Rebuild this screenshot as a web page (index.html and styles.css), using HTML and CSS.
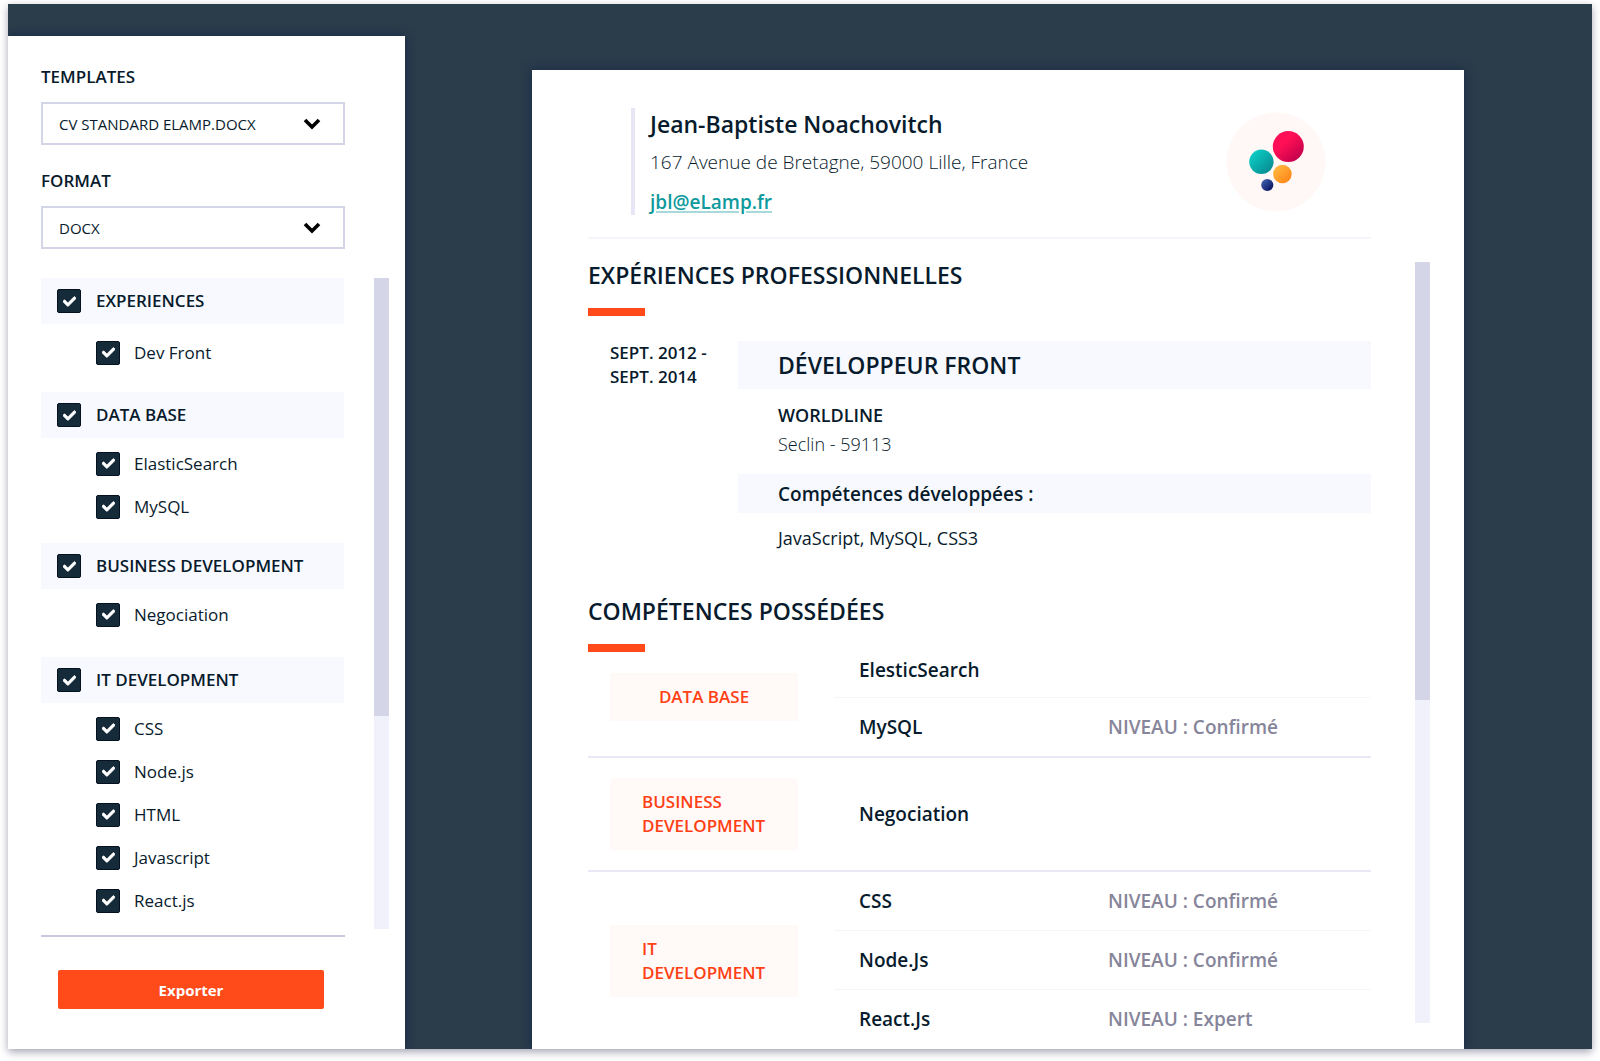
FILE: index.html
```html
<!DOCTYPE html>
<html lang="fr">
<head>
<meta charset="utf-8">
<meta name="viewport" content="width=device-width, initial-scale=1">
<title>Export CV</title>
<link rel="stylesheet" href="styles.css">
</head>
<body>
<svg class="sprite" aria-hidden="true">
  <symbol id="tick" viewBox="0 0 512 512"><path d="M173.898 439.404l-166.4-166.4c-9.997-9.997-9.997-26.206 0-36.204l36.203-36.204c9.997-9.998 26.207-9.998 36.204 0L192 312.69 432.095 72.596c9.997-9.997 26.207-9.997 36.204 0l36.203 36.204c9.997 9.997 9.997 26.206 0 36.204l-294.4 294.401c-9.998 9.997-26.207 9.997-36.204-.001z" fill="currentColor" stroke="currentColor" stroke-width="30"/></symbol>
  <symbol id="chevron" viewBox="0 0 18 12"><path d="M2 2l7 7 7-7" fill="none" stroke="currentColor" stroke-width="3.6"/></symbol>
</svg>
<div class="window">
  <aside class="sidebar">
    <form class="form">
      <label class="field-label" for="template">TEMPLATES</label>
      <div class="select">
        <select id="template"><option>CV STANDARD ELAMP.DOCX</option></select>
        <svg class="chevron"><use href="#chevron"/></svg>
      </div>
      <label class="field-label" for="format">FORMAT</label>
      <div class="select">
        <select id="format"><option>DOCX</option></select>
        <svg class="chevron"><use href="#chevron"/></svg>
      </div>
      <div class="picker">
        <div class="groups">
          <div class="group group-roomy">
            <label class="check check-head"><span class="box"><input type="checkbox" checked><svg><use href="#tick"/></svg></span>EXPERIENCES</label>
            <div class="items">
              <label class="check"><span class="box"><input type="checkbox" checked><svg><use href="#tick"/></svg></span>Dev Front</label>
            </div>
          </div>
          <div class="group">
            <label class="check check-head"><span class="box"><input type="checkbox" checked><svg><use href="#tick"/></svg></span>DATA BASE</label>
            <div class="items">
              <label class="check"><span class="box"><input type="checkbox" checked><svg><use href="#tick"/></svg></span>ElasticSearch</label>
              <label class="check"><span class="box"><input type="checkbox" checked><svg><use href="#tick"/></svg></span>MySQL</label>
            </div>
          </div>
          <div class="group group-single">
            <label class="check check-head"><span class="box"><input type="checkbox" checked><svg><use href="#tick"/></svg></span>BUSINESS DEVELOPMENT</label>
            <div class="items">
              <label class="check"><span class="box"><input type="checkbox" checked><svg><use href="#tick"/></svg></span>Negociation</label>
            </div>
          </div>
          <div class="group">
            <label class="check check-head"><span class="box"><input type="checkbox" checked><svg><use href="#tick"/></svg></span>IT DEVELOPMENT</label>
            <div class="items">
              <label class="check"><span class="box"><input type="checkbox" checked><svg><use href="#tick"/></svg></span>CSS</label>
              <label class="check"><span class="box"><input type="checkbox" checked><svg><use href="#tick"/></svg></span>Node.js</label>
              <label class="check"><span class="box"><input type="checkbox" checked><svg><use href="#tick"/></svg></span>HTML</label>
              <label class="check"><span class="box"><input type="checkbox" checked><svg><use href="#tick"/></svg></span>Javascript</label>
              <label class="check"><span class="box"><input type="checkbox" checked><svg><use href="#tick"/></svg></span>React.js</label>
            </div>
          </div>
        </div>
        <div class="scrollbar"><div class="thumb" style="height:67.3%"></div></div>
      </div>
      <div class="actions"><button class="export" type="button">Exporter</button></div>
    </form>
  </aside>

  <main class="stage">
    <article class="paper">
      <header class="identity">
        <div class="contact">
          <h1>Jean-Baptiste Noachovitch</h1>
          <p class="address">167 Avenue de Bretagne, 59000 Lille, France</p>
          <a class="mail" href="mailto:jbl@eLamp.fr">jbl@eLamp.fr</a>
        </div>
        <svg class="logo" viewBox="0 0 100 100" role="img" aria-label="eLamp">
          <defs>
            <linearGradient id="red" x1=".2" y1=".15" x2=".85" y2=".9"><stop offset=".3" stop-color="#ff0f55"/><stop offset="1" stop-color="#c0004a"/></linearGradient>
            <linearGradient id="teal" x1=".1" y1=".1" x2=".9" y2=".9"><stop offset="0" stop-color="#0bcfc6"/><stop offset="1" stop-color="#078a90"/></linearGradient>
            <linearGradient id="orange" x1=".1" y1=".1" x2=".9" y2=".9"><stop offset="0" stop-color="#ffb941"/><stop offset="1" stop-color="#ff8516"/></linearGradient>
            <linearGradient id="navy" x1=".1" y1=".1" x2=".9" y2=".9"><stop offset="0" stop-color="#3f5fae"/><stop offset="1" stop-color="#06125e"/></linearGradient>
          </defs>
          <circle cx="50" cy="50" r="49.5" fill="#fff8f6"/>
          <circle cx="62.3" cy="34.6" r="15.5" fill="url(#red)"/>
          <circle cx="35.4" cy="49.8" r="12.2" fill="url(#teal)"/>
          <circle cx="56.4" cy="62" r="9.3" fill="url(#orange)"/>
          <circle cx="41.3" cy="73" r="6.1" fill="url(#navy)"/>
        </svg>
      </header>

      <div class="body">
        <div class="content">
          <section>
            <h2>EXPÉRIENCES PROFESSIONNELLES</h2>
            <div class="job">
              <p class="dates">SEPT. 2012 -<br>SEPT. 2014</p>
              <div>
                <h3 class="job-title">DÉVELOPPEUR FRONT</h3>
                <p class="company">WORLDLINE</p>
                <p class="place">Seclin - 59113</p>
                <h4 class="job-skills">Compétences développées :</h4>
                <p class="skills-used">JavaScript, MySQL, CSS3</p>
              </div>
            </div>
          </section>
          <section>
            <h2>COMPÉTENCES POSSÉDÉES</h2>
            <table class="skills">
              <colgroup><col class="col-category"><col class="col-name"><col></colgroup>
              <tbody class="first">
                <tr><th scope="rowgroup" rowspan="2"><div class="tag"><span>DATA BASE</span></div></th><td>ElesticSearch</td><td></td></tr>
                <tr><td>MySQL</td><td class="level">NIVEAU : Confirmé</td></tr>
              </tbody>
              <tbody class="single">
                <tr><th scope="rowgroup"><div class="tag"><span>BUSINESS DEVELOPMENT</span></div></th><td>Negociation</td><td></td></tr>
              </tbody>
              <tbody>
                <tr><th scope="rowgroup" rowspan="3"><div class="tag"><span>IT DEVELOPMENT</span></div></th><td>CSS</td><td class="level">NIVEAU : Confirmé</td></tr>
                <tr><td>Node.Js</td><td class="level">NIVEAU : Confirmé</td></tr>
                <tr><td>React.Js</td><td class="level">NIVEAU : Expert</td></tr>
              </tbody>
            </table>
          </section>
        </div>
        <div class="scrollbar scrollbar-paper"><div class="thumb" style="height:57.6%"></div></div>
      </div>
    </article>
  </main>
</div>
</body>
</html>
```
FILE: styles.css
```css
:root {
  --ink: #071b2c;
  --slate: #2b3d4b;
  --orange: #ff4a1a;
  --band: #f8f9ff;
  --line: #d5d5e8;
}
* { box-sizing: border-box; }
body {
  margin: 0;
  padding: 4px 8px 12px;
  background: #fff;
  color: var(--ink);
  font: 400 17px/24px "Open Sans", "Noto Sans", sans-serif;
}
h1, h2, h3, h4, p { margin: 0; font-weight: 600; }
.sprite { display: none; }

.window {
  display: flex;
  min-height: calc(100vh - 17px);
  background: var(--slate);
  box-shadow: 0 3px 8px rgba(30, 30, 70, .4);
}

/* Sidebar */
.sidebar {
  flex: none;
  width: 397px;
  margin-top: 32px;
  padding: 29px 16px 0 33px;
  background: #fff;
  box-shadow: 0 0 10px rgba(16, 28, 70, .7);
  clip-path: inset(-12px -12px 0 0);
}
.form { display: flex; flex-direction: column; }
.field-label { font-size: 17px; font-weight: 600; margin-bottom: 13px; }
.select {
  display: grid;
  align-items: center;
  margin: 0 44px 24px 0;
}
.select > * { grid-area: 1 / 1; }
.select select {
  width: 100%;
  height: 43px;
  padding: 0 16px;
  border: 2px solid var(--line);
  border-radius: 0;
  background: #fff;
  color: var(--ink);
  font: 400 15px/24px "Open Sans", "Noto Sans", sans-serif;
  appearance: none;
}
.chevron {
  justify-self: end;
  width: 18px;
  height: 12px;
  margin-right: 24px;
  color: #000;
  pointer-events: none;
}
.picker {
  display: grid;
  grid-template-columns: 1fr 15px;
  gap: 30px;
  margin-top: 5px;
}
.scrollbar { background: #f1f1fb; }
.thumb { background: var(--line); }
.groups { padding-bottom: 7px; }
.items { padding: 4px 0 15px 55px; }
.group:last-child .items { padding-bottom: 0; }
.group-roomy .items { padding: 7px 0 18px 55px; }
.group-single .items { padding-bottom: 21px; }
.check {
  display: flex;
  align-items: center;
  gap: 14px;
  height: 43px;
}
.check-head {
  gap: 15px;
  height: 46px;
  padding-left: 16px;
  background: var(--band);
  font-weight: 600;
}
.box { display: grid; place-items: center; color: #fff; }
.box > * { grid-area: 1 / 1; }
.box input {
  width: 24px;
  height: 24px;
  margin: 0;
  border: 1px solid #04121f;
  border-radius: 2px;
  background: #162b3a;
  appearance: none;
}
.box svg { width: 13px; height: 13px; pointer-events: none; visibility: hidden; }
.box input:checked + svg { visibility: visible; }
.actions {
  margin: 6px 44px 0 0;
  padding: 33px 21px 39px 17px;
  border-top: 2px solid #c9c8de;
}
.export {
  width: 100%;
  height: 39px;
  border: 0;
  border-radius: 2px;
  background: var(--orange);
  color: #fff;
  font: 700 15px/24px "Open Sans", "Noto Sans", sans-serif;
}

/* Document preview */
.stage {
  flex: 1;
  display: flex;
  min-width: 0;
  padding: 66px 128px 0 127px;
}
.paper {
  flex: 1;
  display: flex;
  flex-direction: column;
  padding: 38px 34px 0 56px;
  background: #fff;
  box-shadow: 0 0 10px rgba(16, 28, 70, .7);
  clip-path: inset(-12px -12px 0 -12px);
}
.identity {
  display: flex;
  justify-content: space-between;
  align-items: flex-start;
  margin-right: 59px;
  padding: 0 45px 22px 43px;
  border-bottom: 2px solid #f5f5fc;
}
.contact {
  height: 107px;
  padding-left: 15px;
  border-left: 4px solid #e6e6f6;
}
h1 { font-size: 23px; line-height: 32px; }
.address { margin: 10px 0 16px; font-size: 19px; font-weight: 300; }
.mail {
  color: #0e9a9c;
  font-size: 19px;
  font-weight: 600;
  text-decoration-color: #a9d8da;
  text-decoration-thickness: 2px;
  text-underline-offset: 2px;
}
.logo { width: 100px; height: 100px; margin-top: 4px; }

.body {
  flex: 1;
  display: grid;
  grid-template-columns: 1fr 15px;
  gap: 44px;
}
.scrollbar-paper { margin: 23px 0 26px; }
.content { padding-top: 20px; }
h2 { font-size: 23px; line-height: 32px; }
h2::after {
  content: "";
  display: block;
  width: 57px;
  height: 8px;
  margin-top: 17px;
  background: var(--orange);
}
.job {
  display: grid;
  grid-template-columns: 150px 1fr;
  margin: 25px 0 45px;
}
.job p, .job h3, .job h4 { padding-left: 40px; }
.job .dates { padding-left: 22px; }
.job .job-title {
  padding-top: 8px;
  padding-bottom: 8px;
  background: var(--band);
  font-size: 23px;
  line-height: 32px;
}
.company { margin-top: 14px; font-size: 18px; }
.place { margin: 5px 0 18px; font-size: 18px; font-weight: 300; }
.job .job-skills {
  padding-top: 8px;
  padding-bottom: 7px;
  background: var(--band);
  font-size: 19px;
}
.skills-used { margin-top: 13px; font-size: 18px; }
.job .skills-used { font-weight: 400; }

.skills {
  width: 100%;
  margin-top: -8px;
  border-collapse: collapse;
  table-layout: fixed;
}
.col-category { width: 246px; }
.col-name { width: 274px; }
.skills tbody { border-bottom: 2px solid #e8e8f6; }
.skills tbody:last-child { border-bottom: 0; }
.skills td {
  height: 59px;
  padding: 0 0 0 25px;
  border-bottom: 1px solid #f4f4fa;
  font-size: 19px;
  font-weight: 600;
}
.skills tr:last-child td { border-bottom: 0; height: 60px; }
.skills .first tr:first-child td { height: 53px; }
.skills .single tr:last-child td { height: 114px; }
.skills .level { padding-left: 0; color: #86859a; }
.skills th { padding: 0 36px 0 22px; text-align: left; font-weight: 600; }
.skills .first th { padding-bottom: 6px; }
.tag {
  display: flex;
  justify-content: center;
  padding: 12px 32px;
  background: #fffaf8;
  color: #ff4014;
}
```
